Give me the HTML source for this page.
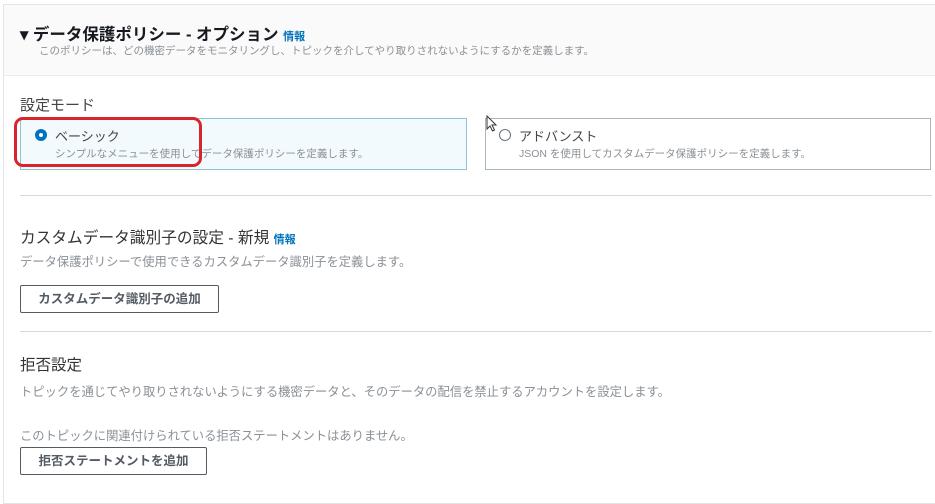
<!DOCTYPE html>
<html><head><meta charset="utf-8"><style>
*{margin:0;padding:0;box-sizing:border-box}
body{width:935px;height:494px;background:#fff;font-family:"Liberation Sans","Noto Sans CJK JP",sans-serif;color:#16191f;position:relative;overflow:hidden}
.abs{position:absolute;white-space:nowrap}
.frame{position:absolute;left:3px;top:4px;width:940px;height:500px;border:1px solid #e4e4e4}
.hdr{position:absolute;left:4px;top:5px;width:935px;height:71px;background:#fafafa;border-bottom:1px solid #eaeded}
.info{color:#0073bb;font-size:11px;font-weight:bold}
.gray{color:#8a9096;font-size:12.3px}
.btn{position:absolute;border:1px solid #545b64;border-radius:2px;background:#fff;font-size:12.5px;font-weight:bold;color:#545b64;text-align:center}
.hr{position:absolute;left:20px;width:912px;height:1px;background:#d5dbdb}
</style></head><body>
<div class="frame"></div>
<div class="hdr"></div>
<div class="abs" style="left:20px;top:21px;font-size:16.5px;font-weight:bold">▾ データ保護ポリシー - オプション <span class="info">情報</span></div>
<div class="abs gray" style="left:39px;top:43px;font-size:10.5px">このポリシーは、どの機密データをモニタリングし、トピックを介してやり取りされないようにするかを定義します。</div>
<div class="abs" style="left:20px;top:94px;font-size:15px;color:#444">設定モード</div>
<div style="position:absolute;left:20px;top:118px;width:447px;height:52px;background:#f3fafd;border:1px solid #8fc3d6"></div>
<div style="position:absolute;left:35px;top:129px;width:12px;height:12px;border-radius:50%;border:4px solid #0073bb;background:#fff"></div>
<div class="abs" style="left:55px;top:126px;font-size:13px;color:#444">ベーシック</div>
<div class="abs gray" style="left:55px;top:146px;font-size:10.5px">シンプルなメニューを使用してデータ保護ポリシーを定義します。</div>
<div style="position:absolute;left:14px;top:117px;width:188px;height:50px;border:3px solid #d9252a;border-radius:9px"></div>
<div style="position:absolute;left:485px;top:118px;width:446px;height:52px;border:1px solid #aab7b8"></div>
<div style="position:absolute;left:499px;top:129px;width:12px;height:12px;border-radius:50%;border:1px solid #687078"></div>
<div class="abs" style="left:519px;top:126px;font-size:13px;color:#444">アドバンスト</div>
<div class="abs gray" style="left:519px;top:146px;font-size:10.5px">JSON を使用してカスタムデータ保護ポリシーを定義します。</div>
<svg class="abs" style="left:486px;top:115px" width="12" height="18" viewBox="0 0 12 18"><path d="M1 1 L1 14 L4 11 L6.5 16 L8.5 15 L6 10 L10 10 Z" fill="#fff" stroke="#333" stroke-width="1"/></svg>
<div class="hr" style="top:195px"></div>
<div class="abs" style="left:20px;top:225px;font-size:15.7px;color:#333">カスタムデータ識別子の設定 - 新規 <span class="info">情報</span></div>
<div class="abs gray" style="left:20px;top:252px">データ保護ポリシーで使用できるカスタムデータ識別子を定義します。</div>
<div class="btn" style="left:20px;top:285px;width:199px;height:28px;line-height:26px">カスタムデータ識別子の追加</div>
<div class="hr" style="top:331px"></div>
<div class="abs" style="left:20px;top:353px;font-size:15.5px;color:#333">拒否設定</div>
<div class="abs gray" style="left:20px;top:382px">トピックを通じてやり取りされないようにする機密データと、そのデータの配信を禁止するアカウントを設定します。</div>
<div class="abs gray" style="left:20px;top:426px">このトピックに関連付けられている拒否ステートメントはありません。</div>
<div class="btn" style="left:20px;top:447px;width:187px;height:28px;line-height:26px">拒否ステートメントを追加</div>
</body></html>
